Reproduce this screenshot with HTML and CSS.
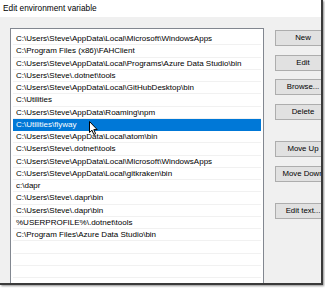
FILE: index.html
```html
<!DOCTYPE html>
<html>
<head>
<meta charset="utf-8">
<link rel="stylesheet" href="styles.css">
</head>
<body>
<div class="frame">
  <div class="dialog">
    <div class="titlebar">Edit environment variable</div>
    <div class="content">
      <div class="list">
        <div class="row">C:\Users\Steve\AppData\Local\Microsoft\WindowsApps</div>
        <div class="row">C:\Program Files (x86)\FAHClient</div>
        <div class="row">C:\Users\Steve\AppData\Local\Programs\Azure Data Studio\bin</div>
        <div class="row">C:\Users\Steve\.dotnet\tools</div>
        <div class="row">C:\Users\Steve\AppData\Local\GitHubDesktop\bin</div>
        <div class="row">C:\Utilities</div>
        <div class="row">C:\Users\Steve\AppData\Roaming\npm</div>
        <div class="row selected">C:\Utilities\flyway
          <svg class="cursor" width="11" height="15" viewBox="0 0 11 15"><path d="M0.5 0.5 L0.5 11.5 L3 9.2 L4.8 13.5 L6.6 12.7 L4.8 8.6 L8.2 8.6 Z" fill="#fff" stroke="#000" stroke-width="1" stroke-linejoin="miter"/></svg>
        </div>
        <div class="row">C:\Users\Steve\AppData\Local\atom\bin</div>
        <div class="row">C:\Users\Steve\.dotnet\tools</div>
        <div class="row">C:\Users\Steve\AppData\Local\Microsoft\WindowsApps</div>
        <div class="row">C:\Users\Steve\AppData\Local\gitkraken\bin</div>
        <div class="row">c:\dapr</div>
        <div class="row">C:\Users\Steve\.dapr\bin</div>
        <div class="row">C:\Users\Steve\.dapr\bin</div>
        <div class="row">%USERPROFILE%\.dotnet\tools</div>
        <div class="row">C:\Program Files\Azure Data Studio\bin</div>
        <div class="row"></div>
        <div class="row"></div>
        <div class="row"></div>
        <div class="row"></div>
        <div class="row"></div>
      </div>
      <div class="buttons">
        <div class="btn">New</div>
        <div class="btn">Edit</div>
        <div class="btn">Browse...</div>
        <div class="btn">Delete</div>
        <div class="btn b-up">Move Up</div>
        <div class="btn">Move Down</div>
        <div class="btn b-text">Edit text...</div>
      </div>
    </div>
  </div>
</div>
</body>
</html>
```
FILE: styles.css
```css
html, body {
  margin: 0;
  padding: 0;
  background: #ffffff;
}
.frame {
  width: 325px;
  height: 288px;
  overflow: hidden;
  background: #ffffff;
}
.dialog {
  width: 321px;
  height: 283px;
  background: #f0f0f0;
  overflow: hidden;
  border-right: 2px solid #3a3a3a;
  border-bottom: 2px solid #3a3a3a;
  box-shadow: 1px 1px 2px rgba(0,0,0,0.45);
  font-family: "Segoe UI", "Liberation Sans", Arial, sans-serif;
  font-size: 8px;
  color: #000;
}
.titlebar {
  height: 17px;
  background: #ffffff;
  line-height: 16px;
  padding-left: 3px;
  font-size: 8.3px;
}
.content {
  display: flex;
  gap: 11px;
  padding: 11px 0 0 10px;
}
.list {
  width: 248px;
  height: 270px;
  flex-shrink: 0;
  background: #ffffff;
  border: 1px solid #828790;
  padding: 4px 2px 0 2px;
  overflow: hidden;
}
.row {
  position: relative;
  height: 12.25px;
  line-height: 12px;
  padding-left: 3px;
  box-sizing: border-box;
  border-bottom: 1px solid #f1f1f1;
  white-space: nowrap;
}
.row.selected {
  background: #0078d7;
  color: #ffffff;
  border-bottom-color: #0078d7;
}
.cursor {
  position: absolute;
  left: 76px;
  top: 2px;
}
.buttons {
  display: flex;
  flex-direction: column;
  gap: 8.5px;
  padding-top: 2px;
  flex-shrink: 0;
  width: 56px;
}
.btn {
  height: 16px;
  box-sizing: border-box;
  background: #e1e1e1;
  border: 1px solid #adadad;
  text-align: center;
  line-height: 14px;
  font-size: 7.8px;
  white-space: nowrap;
  overflow: hidden;
}
.b-up {
  margin-top: 13px;
}
.b-text {
  margin-top: 13px;
}
```
